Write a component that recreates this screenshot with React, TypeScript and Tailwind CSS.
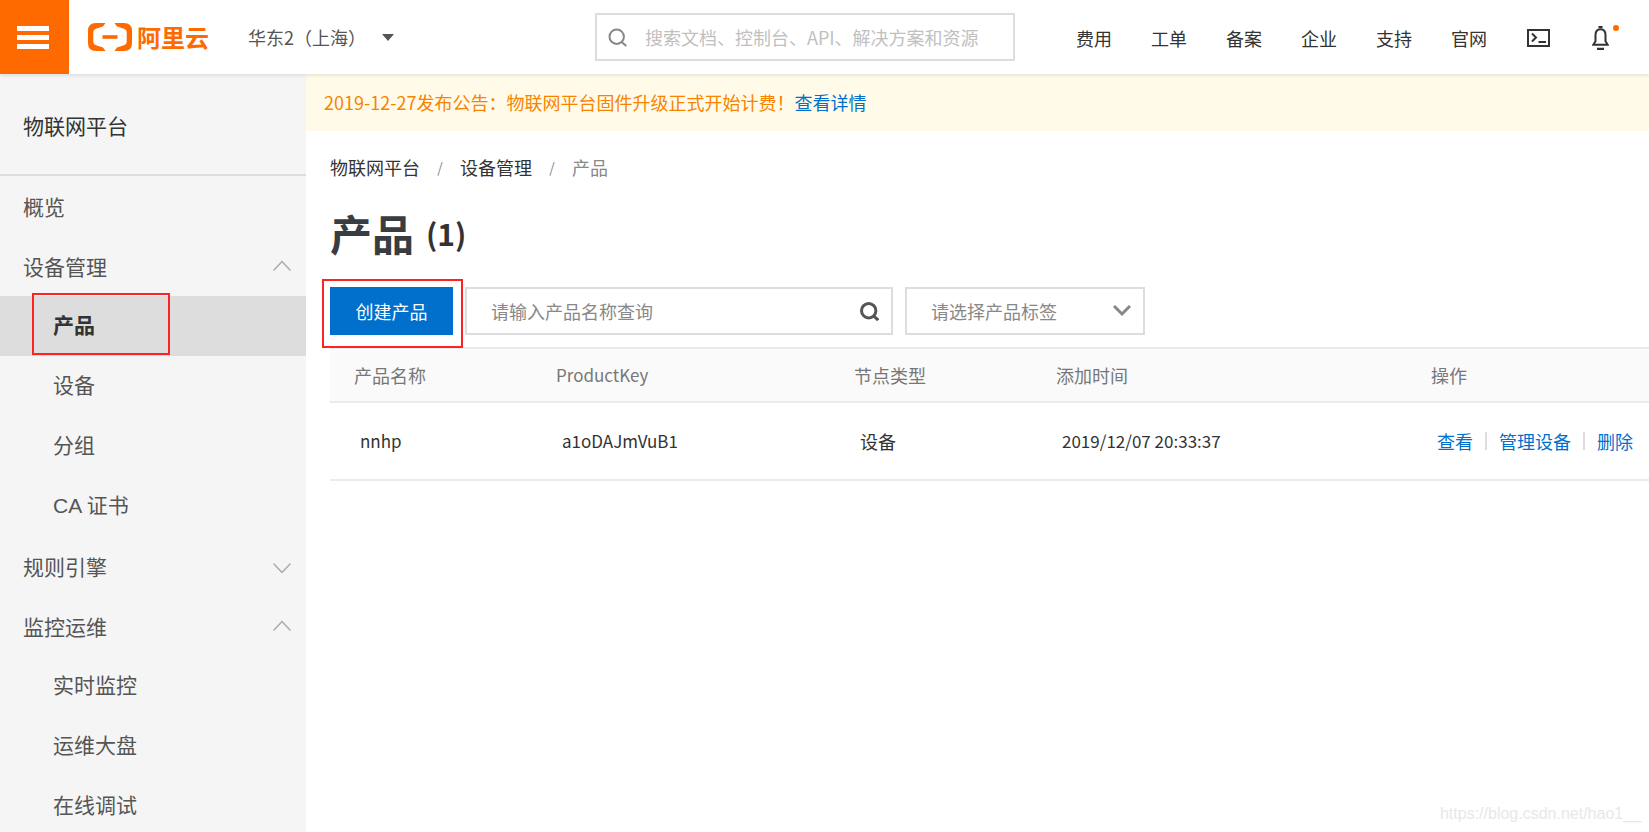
import { ReactNode } from 'react';

interface MenuEntry {
  label: string;
  open?: boolean;
  children?: string[];
}

const NAV_LINKS = ['费用', '工单', '备案', '企业', '支持', '官网'];

const MENU: MenuEntry[] = [
  { label: '概览' },
  { label: '设备管理', open: true, children: ['产品', '设备', '分组', 'CA 证书'] },
  { label: '规则引擎', open: false, children: [] },
  { label: '监控运维', open: true, children: ['实时监控', '运维大盘', '在线调试'] },
];

const PRODUCTS = [
  { name: 'nnhp', key: 'a1oDAJmVuB1', nodeType: '设备', createdAt: '2019/12/07 20:33:37' },
];

function SearchIcon({ strokeWidth, className }: { strokeWidth: number; className: string }) {
  return (
    <svg viewBox="0 0 19 19" className={`h-[19px] w-[19px] shrink-0 ${className}`} fill="none" stroke="currentColor" strokeWidth={strokeWidth} aria-hidden="true">
      <circle cx="8.700" cy="8.700" r="7.200" />
      <path d="M13.500 13.800l4.700 4.300" />
    </svg>
  );
}

function MenuArrow({ open }: { open: boolean }) {
  return (
    <svg viewBox="0 0 18 14" className="h-3.5 w-[18px] text-[#aaa]" fill="none" stroke="currentColor" strokeWidth="1.500" aria-hidden="true">
      <path d={open ? 'M.5 11.500L9 2.500l8.500 9' : 'M.5 4.500l8.500 9 8.500-9'} />
    </svg>
  );
}

function Logo() {
  return (
    <a href="#" aria-label="阿里云" className="ml-[19px] flex items-center gap-[5px] text-[#ff6a00]">
      <svg viewBox="0 0 44 28" className="h-7 w-11 shrink-0" fill="currentColor" aria-hidden="true">
        <path d="M17.500 0H8Q0 0 0 8v12q0 8 8 8h9.500l-2.500-3.600-7-2.100Q5.300 21.500 5.300 19V9q0-2.500 2.700-3.300l7-2.100z" />
        <path d="M26.500 0H36q8 0 8 8v12q0 8-8 8h-9.500l2.500-3.600 7-2.100q2.700-.8 2.700-3.300V9q0-2.500-2.700-3.300l-7-2.100z" />
        <path d="M14.500 12.200h15v3.600h-15z" />
      </svg>
      <span className="text-2xl leading-7 font-bold">阿里云</span>
    </a>
  );
}

function Header() {
  return (
    <header className="relative z-10 flex h-[74px] items-center bg-white shadow-[0_1px_4px_rgba(0,0,0,0.13)]">
      <button aria-label="菜单" className="flex h-full w-[69px] shrink-0 flex-col justify-center gap-1 bg-[#ff6a00] pl-[17px]">
        <span className="h-[5px] w-8 bg-white" />
        <span className="h-[5px] w-8 bg-white" />
        <span className="h-[5px] w-8 bg-white" />
      </button>
      <Logo />
      <button className="ml-[39px] flex shrink-0 items-center gap-4 text-lg text-[#555]">
        华东2（上海）
        <svg viewBox="0 0 12 7" className="h-[7px] w-3" fill="currentColor" aria-hidden="true">
          <path d="M0 0h12L6 7z" />
        </svg>
      </button>

      <label className="mr-[61px] ml-auto flex h-12 w-[420px] items-center gap-[18px] border-2 border-[#ddd] px-[11px]">
        <SearchIcon strokeWidth={2} className="text-[#888]" />
        <input
          type="search"
          aria-label="搜索"
          placeholder="搜索文档、控制台、API、解决方案和资源"
          className="w-full text-lg outline-none placeholder:text-[#c0c0c0]"
        />
      </label>

      <div className="flex shrink-0 items-center pt-0.5 text-lg text-[#333]">
        <nav className="flex items-center gap-[39px]">
          {NAV_LINKS.map((link) => (
            <a key={link} href="#">{link}</a>
          ))}
        </nav>
        <button aria-label="Cloud Shell" className="ml-10">
          <svg viewBox="0 0 23 18" className="h-[18px] w-[23px]" fill="none" stroke="currentColor" strokeWidth="2" aria-hidden="true">
            <path d="M1 1h21v16H1zM5 4.500l4 4-4 4M11.500 13h7.500" />
          </svg>
        </button>
        <button aria-label="消息" className="relative mr-10 ml-[42px]">
          <svg viewBox="0 0 17 24" className="h-6 w-[17px]" fill="none" stroke="currentColor" strokeWidth="2" aria-hidden="true">
            <path d="M6.500 1.200h4M5 22.800h7" strokeWidth="2.200" />
            <path d="M1.300 18.800h14.400l-2.200-3.500V9c0-3.800-1.800-5.800-5-5.800s-5 2-5 5.800v6.300z" />
          </svg>
          <span className="absolute -top-px -right-2.5 h-1.5 w-1.5 rounded-full bg-[#ff6a00]" />
        </button>
      </div>
    </header>
  );
}

function Sidebar() {
  return (
    <aside className="w-[306px] shrink-0 bg-[#f5f5f5] font-['Liberation_Sans','Noto_Sans_CJK_SC',sans-serif] text-[21px] text-[#555]">
      <h2 className="flex h-[102px] items-center border-b-2 border-[#ddd] pt-1.5 pl-[23px] text-[#333]">物联网平台</h2>
      <ul>
        {MENU.map((entry) => (
          <li key={entry.label}>
            <button className="flex h-15 w-full items-center justify-between pr-[15px] pl-[23px]">
              <span className="pt-1">{entry.label}</span>
              {entry.children && <MenuArrow open={entry.open === true} />}
            </button>
            {entry.children && (
              <ul>
                {entry.children.map((child) => {
                  const active = child === '产品';
                  return (
                    <li key={child} className={active ? 'relative bg-[#ddd] font-bold text-[#333]' : ''}>
                      <a href="#" className="flex h-15 items-center pl-[53px]">{child}</a>
                      {active && (
                        <span className="absolute -top-[3px] left-8 h-[62px] w-[138px] border-2 border-[#f22]" />
                      )}
                    </li>
                  );
                })}
              </ul>
            )}
          </li>
        ))}
      </ul>
    </aside>
  );
}

function HeadCell({ children, className = '' }: { children: ReactNode; className?: string }) {
  return <th className={`pl-6 text-left font-normal ${className}`}>{children}</th>;
}

function ProductTable() {
  return (
    <table className="mt-3 w-full table-fixed border-t-2 border-[#ebebeb] text-lg">
      <colgroup>
        <col className="w-[202px]" />
        <col className="w-[298px]" />
        <col className="w-[202px]" />
        <col />
        <col className="w-[242px]" />
      </colgroup>
      <thead>
        <tr className="h-[54px] border-b-2 border-[#ebebeb] bg-[#fafafa] text-[#777]">
          <HeadCell>产品名称</HeadCell>
          <HeadCell className="text-[17px]">ProductKey</HeadCell>
          <HeadCell>节点类型</HeadCell>
          <HeadCell>添加时间</HeadCell>
          <HeadCell>操作</HeadCell>
        </tr>
      </thead>
      <tbody>
        {PRODUCTS.map((product) => (
          <tr key={product.key} className="h-[78px] border-b-2 border-[#ebebeb] text-[#333]">
            <td className="pl-[30px] text-[17px]">{product.name}</td>
            <td className="pl-[30px] text-[17px]">{product.key}</td>
            <td className="pl-[30px]">{product.nodeType}</td>
            <td className="pl-[30px] text-[17px]">{product.createdAt}</td>
            <td className="pl-[30px]">
              <div className="flex items-center gap-3 whitespace-nowrap text-[#0070cc]">
                <a href="#">查看</a>
                <span className="h-[18px] w-0.5 bg-[#ddd]" />
                <a href="#">管理设备</a>
                <span className="h-[18px] w-0.5 bg-[#ddd]" />
                <a href="#">删除</a>
              </div>
            </td>
          </tr>
        ))}
      </tbody>
    </table>
  );
}

export default function App() {
  return (
    <div className="relative flex min-h-screen flex-col bg-white font-['Noto_Sans_CJK_SC',sans-serif] text-lg text-[#333]">
      <Header />
      <div className="flex flex-1">
        <Sidebar />
        <main className="min-w-0 flex-1">
          <p className="flex h-[57px] items-center bg-[#fffbe8] pb-0.5 pl-[18px] text-[#f78400]">
            2019-12-27发布公告：物联网平台固件升级正式开始计费！
            <a href="#" className="text-[#0070cc]">查看详情</a>
          </p>

          <div className="pl-6">
            {/* Breadcrumb */}
            <nav className="mt-[22px] flex items-center">
              <a href="#">物联网平台</a>
              <span className="w-10 text-center text-sm text-[#888]">/</span>
              <a href="#">设备管理</a>
              <span className="w-10 text-center text-sm text-[#888]">/</span>
              <span className="text-[#888]">产品</span>
            </nav>

            <h1 className="mt-5 flex h-16 items-center gap-3 font-bold">
              <span className="text-[42px] text-[#373d41]">产品</span>
              <span className="text-[30px]">(1)</span>
            </h1>

            {/* Toolbar */}
            <div className="mt-[22px] flex items-center gap-3">
              <div className="relative">
                <button className="h-12 w-[123px] bg-[#0070cc] text-white">创建产品</button>
                <span className="pointer-events-none absolute -top-2 -left-2 h-[69px] w-[141px] border-2 border-[#f22]" />
              </div>
              <label className="flex h-12 w-[428px] items-center border-2 border-[#ddd] pr-3 pl-6">
                <input
                  type="text"
                  aria-label="产品名称"
                  placeholder="请输入产品名称查询"
                  className="w-full outline-none placeholder:text-[#888]"
                />
                <SearchIcon strokeWidth={3} className="text-[#555]" />
              </label>
              <div className="relative">
                <select
                  aria-label="产品标签"
                  className="h-12 w-60 appearance-none border-2 border-[#ddd] bg-white pl-6 text-[#888]"
                >
                  <option>请选择产品标签</option>
                </select>
                <svg viewBox="0 0 18 12" className="pointer-events-none absolute top-[18px] right-3.5 h-3 w-[18px] text-[#888]" fill="none" stroke="currentColor" strokeWidth="3" aria-hidden="true">
                  <path d="M1 1l8 8 8-8" />
                </svg>
              </div>
            </div>

            <ProductTable />
          </div>
        </main>
      </div>
      <span className="absolute right-2 bottom-2.5 font-['Liberation_Sans',sans-serif] text-base text-[#e8e8e8]">
        https://blog.csdn.net/hao1__
      </span>
    </div>
  );
}
